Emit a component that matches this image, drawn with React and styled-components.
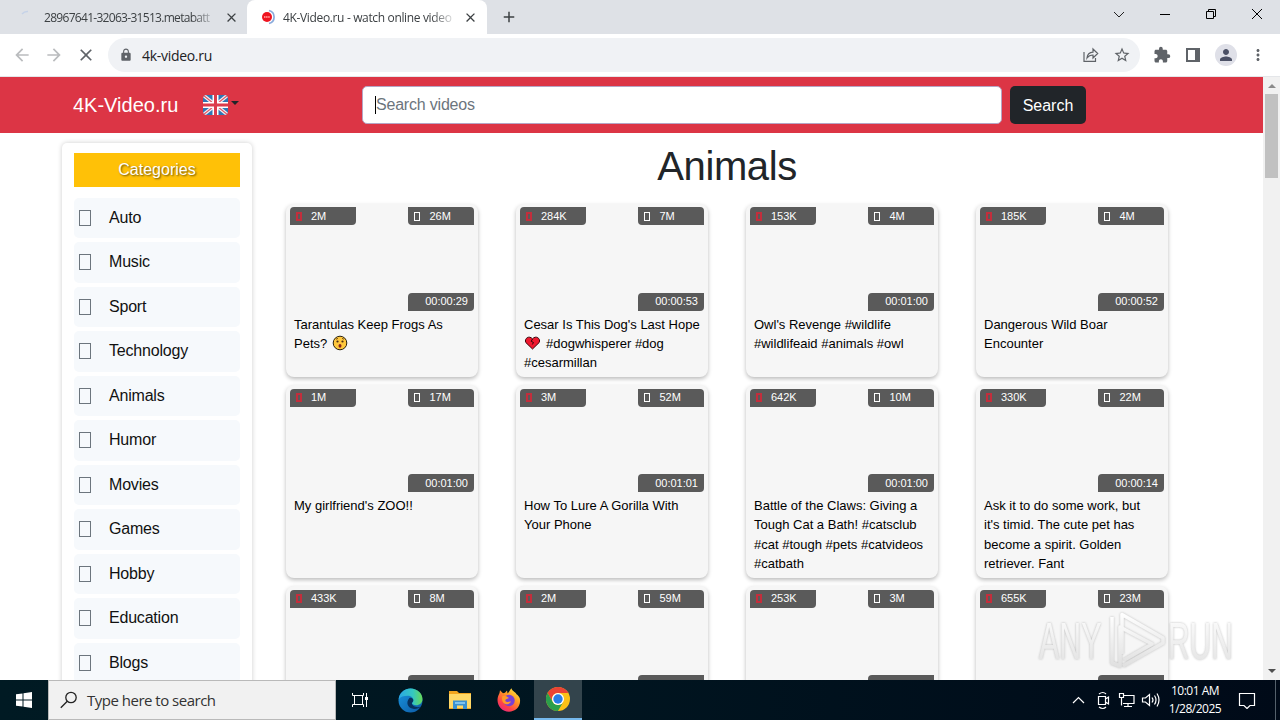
import React from 'react';
import styled, { createGlobalStyle, css } from 'styled-components';
import {
  MdAdd,
  MdArrowBack,
  MdArrowForward,
  MdClose,
  MdExtension,
  MdLock,
  MdMoreVert,
  MdPerson,
  MdStarBorder,
} from 'react-icons/md';

const GlobalStyle = createGlobalStyle`
  * {
    box-sizing: border-box;
  }

  body {
    margin: 0;
    overflow: hidden;
    background: #fff;
    font-family: "Liberation Sans", Arial, sans-serif;
  }

  svg {
    display: block;
    flex: none;
  }
`;

const Screen = styled.div`
  display: flex;
  flex-direction: column;
  width: 1280px;
  height: 720px;
  overflow: hidden;
`;

/* ---------- browser window ---------- */

const TabStrip = styled.div`
  display: flex;
  height: 34px;
  background: #dee1e6;
  font-family: "Open Sans", sans-serif;
`;

const Tab = styled.div`
  display: flex;
  align-items: center;
  width: ${(p) => (p.$active ? '240px' : '247px')};
  padding-left: ${(p) => (p.$active ? '13px' : '19px')};
  border-radius: 8px 8px 0 0;
  background: ${(p) => (p.$active ? '#fff' : 'transparent')};
  color: #3c4043;
`;

const TabTitle = styled.span`
  width: 171px;
  margin: 0 9px 0 ${(p) => p.$left}px;
  overflow: hidden;
  white-space: nowrap;
  font-size: 12px;
  letter-spacing: ${(p) => p.$spacing}px;
  mask-image: linear-gradient(to right, #000 148px, transparent 174px);
`;

const NewTab = styled.div`
  display: flex;
  align-items: center;
  padding-left: 13px;
  color: #3c4043;
`;

const WindowControls = styled.div`
  display: flex;
  align-items: flex-start;
  gap: 30px;
  margin-left: auto;
  padding: 6px 15px 0 0;
`;

const Toolbar = styled.div`
  display: flex;
  align-items: center;
  height: 43px;
  padding-left: 12px;
  border-bottom: 1px solid #e4e6e9;
  background: #fff;
  color: #5f6368;
`;

const NavButtons = styled.div`
  display: flex;
  gap: 12px;
  width: 96px;
  color: #babcbe;

  svg:last-child {
    color: #5f6368;
  }
`;

const AddressBar = styled.div`
  display: flex;
  align-items: center;
  width: 1032px;
  height: 34px;
  padding: 0 9px 0 11px;
  border-radius: 17px;
  background: #f0f2f5;
`;

const Address = styled.span`
  flex: 1;
  margin-left: 9px;
  font-family: "Open Sans", sans-serif;
  font-size: 14px;
  letter-spacing: -0.3px;
  color: #202124;
`;

const ShareSlot = styled.div`
  margin-right: 14px;
`;

const ToolbarIcons = styled.div`
  display: flex;
  align-items: center;
  gap: 12px;
  margin-left: 13px;
`;

const Avatar = styled.div`
  display: flex;
  align-items: center;
  justify-content: center;
  width: 22px;
  height: 22px;
  border-radius: 50%;
  background: #dfe0e8;
  color: #4c5166;
`;

/* ---------- page ---------- */

const Viewport = styled.div`
  position: relative;
  display: flex;
  height: 603px;
  overflow: hidden;
`;

const Page = styled.div`
  width: 1263px;
  height: 603px;
  overflow: hidden;
  background: #fff;
`;

const Navbar = styled.header`
  display: flex;
  align-items: center;
  height: 56px;
  padding-left: 73px;
  background: #dc3545;
`;

const Brand = styled.div`
  width: 130px;
  font-size: 20px;
  color: #fff;
`;

const Language = styled.div`
  display: flex;
  width: 159px;
  gap: 3px;
`;

const Caret = styled.span`
  margin-top: 6px;
  height: 0;
  border: 4px solid transparent;
  border-top-color: #212529;
  border-bottom: 0;
`;

const SearchField = styled.div`
  display: flex;
  align-items: center;
  width: 640px;
  height: 38px;
  margin-right: 8px;
  padding-left: 12px;
  border: 1px solid #b5a5c4;
  border-radius: 5px;
  background: #fff;
  color: #6c757d;
  font-size: 16px;
  letter-spacing: -0.2px;

  &::before {
    content: "";
    width: 1px;
    height: 18px;
    background: #000;
  }
`;

const SearchButton = styled.button`
  width: 76px;
  height: 38px;
  padding: 1px 0 0;
  border: 0;
  border-radius: 5px;
  background: #212529;
  color: #fff;
  font: 16px "Liberation Sans", Arial, sans-serif;
`;

const Content = styled.div`
  display: flex;
  align-items: flex-start;
  padding: 10px 0 0 62px;
`;

const Sidebar = styled.nav`
  width: 190px;
  height: 600px;
  padding: 10px 12px;
  border-radius: 5px;
  box-shadow: 0 0 5px rgba(0, 0, 0, 0.2);
`;

const SidebarTitle = styled.div`
  height: 34px;
  margin-bottom: 10.5px;
  background: #ffc107;
  color: #fff;
  line-height: 34px;
  text-align: center;
  text-shadow: 1px 1px 2px rgba(0, 0, 0, 0.6);
`;

const Category = styled.a`
  display: flex;
  align-items: center;
  height: 40.5px;
  margin-bottom: 4px;
  padding-left: 5px;
  border-radius: 5px;
  background: #f6f9fc;
  color: #111;
  font-size: 16px;
  letter-spacing: -0.2px;
`;

const MissingGlyph = styled.span`
  width: 12px;
  height: 16px;
  margin-right: 18px;
  border: 1px solid #6c757d;
`;

const Main = styled.main`
  width: 882px;
  margin-left: 34px;
`;

const Heading = styled.h1`
  height: 48px;
  margin: 0 0 12.5px;
  font-size: 40px;
  font-weight: 400;
  line-height: 47px;
  letter-spacing: -0.4px;
  text-align: center;
  color: #212529;
`;

const Grid = styled.div`
  display: grid;
  grid-template-columns: repeat(4, 192px);
  gap: 8.5px 38px;
`;

const Card = styled.article`
  padding: 3.5px 4px 4.7px;
  border-radius: 8px;
  background: #f6f6f6;
  box-shadow: 0 2px 4px rgba(0, 0, 0, 0.27);
`;

const Thumb = styled.div`
  display: flex;
  flex-wrap: wrap;
  justify-content: space-between;
  align-content: space-between;
  height: 103.5px;
`;

const Badge = styled.div`
  display: flex;
  align-items: center;
  width: 66px;
  height: 18px;
  background: #5a5a5a;
  color: #fff;
  font-size: 11px;
  line-height: 16px;
  padding-bottom: 1px;

  ${(p) => p.$kind === 'likes' && css`
    padding-left: 6px;
    border-radius: 4px 0 4px 0;
  `}
  ${(p) => p.$kind === 'views' && css`
    padding-left: 6px;
    border-radius: 0 4px 0 4px;
  `}
  ${(p) => p.$kind === 'time' && css`
    justify-content: flex-end;
    margin-left: auto;
    padding-right: 6px;
    border-radius: 4px 0 4px 0;
  `}
`;

const SmallGlyph = styled.span`
  width: 6px;
  height: 9px;
  margin-right: ${(p) => (p.$red ? '9px' : '9.5px')};
  margin-top: 1px;
  border: ${(p) => (p.$red ? '2px solid #c32e3c' : '1px solid #fff')};
`;

const CardTitle = styled.div`
  min-height: 61.6px;
  padding: 4px 0 0 4px;
  font-size: 13px;
  line-height: 19.2px;
  color: #000;
  white-space: nowrap;
`;

const Line = styled.div`
  display: flex;
  height: 19.2px;
  align-items: center;
  gap: 5px;
`;

const Scrollbar = styled.div`
  display: flex;
  flex-direction: column;
  align-items: center;
  justify-content: space-between;
  width: 17px;
  padding: 6px 0 6px;
  background: #f1f1f1;
`;

const ScrollThumb = styled.div`
  width: 13px;
  height: 84px;
  margin: 6px 0 auto;
  background: #c1c1c1;
`;

const Watermark = styled.div`
  position: absolute;
  left: 1030px;
  top: 530px;
`;

/* ---------- taskbar ---------- */

const Taskbar = styled.footer`
  display: flex;
  height: 40px;
  background: linear-gradient(to right, #001a23 0, #001520 45%, #000a18 100%);
  color: #fff;
  font-family: "Open Sans", sans-serif;
`;

const StartButton = styled.div`
  display: flex;
  align-items: center;
  justify-content: center;
  width: 48px;
`;

const TaskSearch = styled.div`
  display: flex;
  align-items: center;
  width: 288px;
  gap: 9px;
  padding-left: 11px;
  border: 1px solid #b9b9b9;
  background: #f1f1f1;
  color: #333;
  font-size: 15px;
  letter-spacing: -0.5px;
`;

const TaskItem = styled.div`
  display: flex;
  align-items: center;
  justify-content: center;
  width: ${(p) => p.$width || 49}px;
  ${(p) => p.$active && css`
    background: #33444c;
    border-bottom: 2px solid #76b9ed;
  `}
`;

const Tray = styled.div`
  display: flex;
  align-items: center;
  margin-left: auto;
`;

const Clock = styled.div`
  width: 72px;
  margin: 0 7px 0 -4px;
  font-size: 12px;
  line-height: 18px;
  letter-spacing: -0.5px;
  text-align: center;
`;

const ShowDesktop = styled.div`
  width: 5px;
  height: 40px;
  margin-left: 19px;
  border-left: 1px solid #54606b;
`;

const Spinner = () => (
  <svg width="16" height="16" viewBox="0 0 16 16" fill="none">
    <path d="M3 5a7 7 0 0 1 6-2.500" stroke="#c5d2e8" strokeWidth="1.500" />
  </svg>
);

const SiteIcon = () => (
  <svg width="16" height="16" viewBox="0 0 16 16" fill="none">
    <circle cx="7" cy="8" r="5" fill="#ee1420" />
    <path d="M4 8h6" stroke="#ff8585" strokeWidth="2" strokeDasharray="1.500 .6" />
    <path d="M9 1.500a6.700 6.700 0 0 1 0 13" stroke="#8aabdc" strokeWidth="1.700" />
  </svg>
);

const ShareIcon = () => (
  <svg width="16" height="16" viewBox="0 0 16 16" fill="none" stroke="#5f6368" strokeWidth="1.200">
    <path d="M1 5v9.400h11.500V11M4 11c.4-4 2.700-5.600 6-5.800V2l4.700 4.500L10 11V8C7.500 8 5.600 8.800 4 11Z" />
  </svg>
);

const PanelIcon = () => (
  <svg width="20" height="16" viewBox="0 0 20 16">
    <path d="M4 2h12v12H4z" fill="none" stroke="#5f6368" strokeWidth="2" />
    <path d="M12 2h4v12h-4z" fill="#5f6368" />
  </svg>
);

const UnionJack = () => (
  <svg width="25" height="20" viewBox="0 0 25 20">
    <clipPath id="flag"><rect width="25" height="20" rx="4" /></clipPath>
    <g clipPath="url(#flag)" fill="none">
      <path fill="#2f76b5" d="M0 0h25v20H0z" />
      <path d="m0 0 25 20M25 0 0 20" stroke="#f3eef2" strokeWidth="3.600" />
      <path d="m0 0 25 20M25 0 0 20" stroke="#df5260" strokeWidth="1.100" />
      <path d="M12.500 0v20M0 10h25" stroke="#fff" strokeWidth="6" />
      <path d="M12.500 0v20M0 10h25" stroke="#dc3c4c" strokeWidth="3" />
    </g>
  </svg>
);

const Surprised = () => (
  <svg width="16" height="16" viewBox="0 0 15 16">
    <circle cx="7.500" cy="8" r="6.800" fill="#ffc83d" stroke="#2a210e" />
    <circle cx="5" cy="6.500" r="1.100" fill="#4b2b13" />
    <circle cx="10" cy="6.500" r="1.100" fill="#4b2b13" />
    <ellipse cx="7.500" cy="10.800" rx="1.500" ry="1.900" fill="#8b251e" />
    <path d="m3.500 4.300 2-1M9.500 3.300l2 1" stroke="#5a3512" strokeWidth=".8" />
  </svg>
);

const BrokenHeart = () => (
  <svg width="17" height="14" viewBox="0 0 16 14">
    <path d="M8 13 1.300 6.500C-.5 2.500 4.500-1 8 2.800c3.500-3.800 8.500-.3 6.700 3.700Z" fill="#f0182e" stroke="#3b0309" />
    <path d="M8 3 6.700 5.300l2.300 1.200-1.200 2" fill="none" stroke="#33060b" />
  </svg>
);

const FolderIcon = () => (
  <svg width="22" height="20" viewBox="0 0 22 20">
    <path d="M0 1h8l2 2h12v16H0z" fill="#f2a51e" />
    <path d="M0 4h22v14H0z" fill="#ffd866" />
    <path d="M4 19v-8.500h14V19h-4v-3.500H8V19z" fill="#3b91d1" />
    <path d="M6 12h10v2H6z" fill="#7fc3ee" />
  </svg>
);

const EdgeIcon = () => (
  <svg width="25" height="25" viewBox="0 0 24 24">
    <defs>
      <linearGradient id="edgeTop" x1="0" x2="1">
        <stop offset="0" stopColor="#2aa7e5" />
        <stop offset=".6" stopColor="#35c8c0" />
        <stop offset="1" stopColor="#67d957" />
      </linearGradient>
      <linearGradient id="edgeLow" x1="0" y1="0" x2="1" y2="1">
        <stop offset="0" stopColor="#1995df" />
        <stop offset="1" stopColor="#0c59a4" />
      </linearGradient>
    </defs>
    <circle cx="12" cy="12" r="11.500" fill="url(#edgeLow)" />
    <path d="M.6 11C1.500 4.500 6.300.5 12 .5c6.800 0 11.500 5 11.500 10 0 4-3 6-6 6-2.500 0-4-.8-4-1.800 0-.8 1.200-1.200 1.200-3 0-2-2-4.200-5.200-4.200C5.500 7.500 2 8.500.6 11Z" fill="url(#edgeTop)" />
    <path d="M11 9.500c-4 4.500-1.500 9.500 3.500 10.500 3 .6 5.500-.5 7.300-2-4 1.200-8.500-.5-8.500-3.500 0-1 1.500-1.200 1.400-3-.1-1.300-2-2.800-3.700-2Z" fill="#07315e" />
  </svg>
);

const FirefoxIcon = () => (
  <svg width="24" height="24" viewBox="0 0 24 24">
    <defs>
      <linearGradient id="fox" x1=".9" y1="0" x2=".2" y2="1">
        <stop offset="0" stopColor="#fff044" />
        <stop offset=".4" stopColor="#ff9a24" />
        <stop offset=".75" stopColor="#ff4148" />
        <stop offset="1" stopColor="#e52585" />
      </linearGradient>
    </defs>
    <path d="M2.500 5 3 2.200l3 3 2-.4L10 2.500l.6 3C13 3 13 1.500 14.500.3c.5 3 3.500 3.200 5 6C21 7 22 9 22.700 10c2 8-4 13.700-10.700 13.700C4 23.700-1.500 15.500 1.200 8Z" fill="url(#fox)" />
    <circle cx="12" cy="12.500" r="5.700" fill="#7840d5" />
    <path d="M5.500 8c3 0 4-.2 6.500 2l-2.800 1.300c-1.600.8-.8 2.700 1 2.700 1.600 0 2-.8 3.800-.4-1 2.200-3.500 3.200-6 2.300C5 14.800 4.500 11 5.500 8Z" fill="#ff9b28" />
  </svg>
);

const ChromeIcon = () => (
  <svg width="24" height="24" viewBox="0 0 24 24">
    <circle cx="12" cy="12" r="12" fill="#fbc116" />
    <path d="M1.600 6A12 12 0 0 1 22.400 6H12a6 6 0 0 0-5.200 9Z" fill="#ea4335" />
    <path d="M1.600 6 6.800 15A6 6 0 0 0 17.200 15L12 24A12 12 0 0 1 1.600 6Z" fill="#2b9f4b" />
    <circle cx="12" cy="12" r="6" fill="#fff" />
    <circle cx="12" cy="12" r="4.700" fill="#287de6" />
  </svg>
);

const AnyRunLogo = () => (
  <svg width="210" height="72" viewBox="0 0 210 72">
    <defs>
      <linearGradient id="markFill" x1="0" y1="0" x2="0" y2="1">
        <stop offset="0" stopColor="#ffffff" />
        <stop offset="1" stopColor="#dedede" />
      </linearGradient>
      <filter id="markShadow" x="-10%" y="-10%" width="120%" height="120%">
        <feDropShadow dx="0" dy="0" stdDeviation="1.200" floodColor="#888" floodOpacity=".65" />
      </filter>
    </defs>
    <g filter="url(#markShadow)" opacity=".9" fontFamily="'Liberation Sans', Arial, sans-serif" fontSize="51" fill="url(#markFill)">
      <text transform="translate(9 52) scale(.6 1)" textLength="104" lengthAdjust="spacingAndGlyphs">ANY</text>
      <text transform="translate(138 52) scale(.6 1)" textLength="108" lengthAdjust="spacingAndGlyphs">RUN</text>
      <g fill="none" stroke="url(#markFill)" strokeWidth="3.500" strokeLinejoin="round">
        <path d="M92 47V7.500L133 31v5L93 59" />
        <path d="M82 10v46l8 3V20l32 17-28 16" />
      </g>
    </g>
  </svg>
);

const categories = ['Auto', 'Music', 'Sport', 'Technology', 'Animals', 'Humor', 'Movies', 'Games', 'Hobby', 'Education', 'Blogs'];

const videos = [
  { likes: '2M', views: '26M', time: '00:00:29', lines: ['Tarantulas Keep Frogs As', <>Pets? <Surprised /></>] },
  { likes: '284K', views: '7M', time: '00:00:53', lines: ["Cesar Is This Dog's Last Hope", <><BrokenHeart /> #dogwhisperer #dog</>, '#cesarmillan'] },
  { likes: '153K', views: '4M', time: '00:01:00', lines: ["Owl's Revenge #wildlife", '#wildlifeaid #animals #owl'] },
  { likes: '185K', views: '4M', time: '00:00:52', lines: ['Dangerous Wild Boar', 'Encounter'] },
  { likes: '1M', views: '17M', time: '00:01:00', lines: ["My girlfriend's ZOO!!"] },
  { likes: '3M', views: '52M', time: '00:01:01', lines: ['How To Lure A Gorilla With', 'Your Phone'] },
  { likes: '642K', views: '10M', time: '00:01:00', lines: ['Battle of the Claws: Giving a', 'Tough Cat a Bath! #catsclub', '#cat #tough #pets #catvideos', '#catbath'] },
  { likes: '330K', views: '22M', time: '00:00:14', lines: ['Ask it to do some work, but', "it's timid. The cute pet has", 'become a spirit. Golden', 'retriever. Fant'] },
  { likes: '433K', views: '8M', time: '', lines: [] },
  { likes: '2M', views: '59M', time: '', lines: [] },
  { likes: '253K', views: '3M', time: '', lines: [] },
  { likes: '655K', views: '23M', time: '', lines: [] },
];

function VideoCard({ video }) {
  return (
    <Card>
      <Thumb>
        <Badge $kind="likes"><SmallGlyph $red />{video.likes}</Badge>
        <Badge $kind="views"><SmallGlyph />{video.views}</Badge>
        <Badge $kind="time">{video.time}</Badge>
      </Thumb>
      <CardTitle>
        {video.lines.map((line, i) => <Line key={i}>{line}</Line>)}
      </CardTitle>
    </Card>
  );
}

function Browser() {
  return (
    <>
      <TabStrip>
        <Tab>
          <Spinner />
          <TabTitle $left={9} $spacing={-0.7}>28967641-32063-31513.metabatt</TabTitle>
          <MdClose size={15} />
        </Tab>
        <Tab $active>
          <SiteIcon />
          <TabTitle $left={7} $spacing={-0.35}>4K-Video.ru - watch online video</TabTitle>
          <MdClose size={15} />
        </Tab>
        <NewTab><MdAdd size={18} /></NewTab>
        <WindowControls>
          <svg width="16" height="16" fill="none" stroke="#222"><path d="m3 6 5 5 5-5" /></svg>
          <svg width="16" height="16" fill="none" stroke="#000"><path d="M3 8.500h10" /></svg>
          <svg width="16" height="16" fill="none" stroke="#000"><path d="M3.500 5.500h7v7h-7zM5.500 5.500v-2h7v7h-2" /></svg>
          <svg width="16" height="16" fill="none" stroke="#000"><path d="m3 3 10 10M13 3 3 13" /></svg>
        </WindowControls>
      </TabStrip>
      <Toolbar>
        <NavButtons>
          <MdArrowBack size={20} />
          <MdArrowForward size={20} />
          <MdClose size={20} />
        </NavButtons>
        <AddressBar>
          <MdLock size={14} />
          <Address>4k-video.ru</Address>
          <ShareSlot><ShareIcon /></ShareSlot>
          <MdStarBorder size={18} />
        </AddressBar>
        <ToolbarIcons>
          <MdExtension size={18} />
          <PanelIcon />
          <Avatar><MdPerson size={18} /></Avatar>
          <MdMoreVert size={18} />
        </ToolbarIcons>
      </Toolbar>
    </>
  );
}

function WindowsTaskbar() {
  return (
    <Taskbar>
      <StartButton>
        <svg width="16" height="16" viewBox="0 0 16 16" fill="#fff">
          <path d="M0 2.300 6.500 1.400v6.100H0zM7.500 1.300 16 0v7.500H7.500zM0 8.500h6.500v6.100L0 13.700zM7.500 8.500H16V16l-8.500-1.300z" />
        </svg>
      </StartButton>
      <TaskSearch>
        <svg width="18" height="18" fill="none" stroke="#222" strokeWidth="1.300">
          <circle cx="11" cy="6.500" r="5.200" />
          <path d="m7.300 10.300-6.500 6.500" />
        </svg>
        Type here to search
      </TaskSearch>
      <TaskItem>
        <svg width="18" height="18" fill="none" stroke="#fff">
          <path d="M.5 2v2.500h11V2M.5 16v-2.500h11V16M2.500 4.500v9M10.500 4.500v9M14.500 2v14" />
          <path d="M13 6h3v3h-3z" fill="#fff" stroke="none" />
        </svg>
      </TaskItem>
      <TaskItem $width={51}><EdgeIcon /></TaskItem>
      <TaskItem $width={47}><FolderIcon /></TaskItem>
      <TaskItem $width={51}><FirefoxIcon /></TaskItem>
      <TaskItem $width={48} $active><ChromeIcon /></TaskItem>
      <Tray>
        <svg width="96" height="20" fill="none" stroke="#fff" strokeWidth="1.200">
          <path d="m6 13 5.500-5.500L17 13" />
          <path d="M31.500 6.500h7v8h-7zM38.500 9l3-2v7l-3-2M32 4q4-3 7 0M32 17q4 3 7 0" />
          <path d="M56 5.500h11v8H56M61 13.500v3M57 16.500h8M52.500 3.500h4v4h-4zM54.500 7.500v8" />
          <path d="M75.500 8v4h3l4 3.500v-11l-4 3.500zM85 7.500q2 2.500 0 5M87.500 5.500q3 4.500 0 9M90 3.500q4 6.500 0 13" />
        </svg>
        <Clock>10:01 AM<br />1/28/2025</Clock>
        <svg width="18" height="18" fill="none" stroke="#fff" strokeWidth="1.200">
          <path d="M1.500 2.500h15v12H12l-3 3-3-3H1.500z" />
        </svg>
        <ShowDesktop />
      </Tray>
    </Taskbar>
  );
}

function App() {
  return (
    <Screen>
      <GlobalStyle />
      <Browser />
      <Viewport>
        <Page>
          <Navbar>
            <Brand>4K-Video.ru</Brand>
            <Language><UnionJack /><Caret /></Language>
            <SearchField>Search videos</SearchField>
            <SearchButton>Search</SearchButton>
          </Navbar>
          <Content>
            <Sidebar>
              <SidebarTitle>Categories</SidebarTitle>
              {categories.map((name) => (
                <Category key={name}><MissingGlyph />{name}</Category>
              ))}
            </Sidebar>
            <Main>
              <Heading>Animals</Heading>
              <Grid>
                {videos.map((video, i) => <VideoCard key={i} video={video} />)}
              </Grid>
            </Main>
          </Content>
        </Page>
        <Scrollbar>
          <svg width="8" height="5" fill="#8b8b8b"><path d="m0 5 4-4 4 4z" /></svg>
          <ScrollThumb />
          <svg width="8" height="5" fill="#505050"><path d="m0 0 4 4 4-4z" /></svg>
        </Scrollbar>
        <Watermark><AnyRunLogo /></Watermark>
      </Viewport>
      <WindowsTaskbar />
    </Screen>
  );
}

export default App;
